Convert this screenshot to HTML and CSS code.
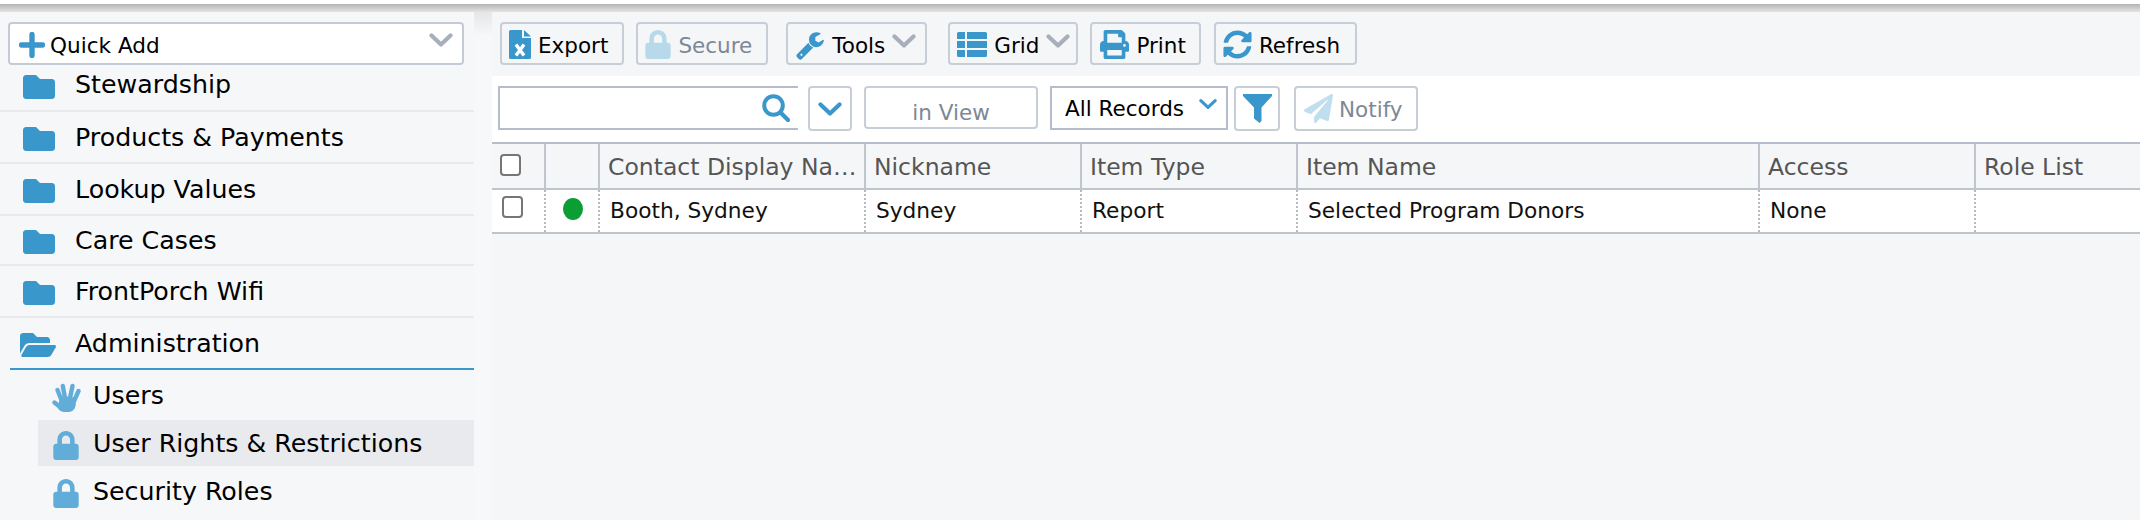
FILE: index.html
```html
<!DOCTYPE html>
<html lang="en">
<head>
<meta charset="utf-8">
<title>User Rights &amp; Restrictions</title>
<link rel="stylesheet" href="styles.css">
</head>
<body>
<svg class="sprites" width="0" height="0" aria-hidden="true">
  <symbol id="i-folder" viewBox="0 0 512 512"><path d="M464 128H272l-64-64H48C21.49 64 0 85.49 0 112v288c0 26.51 21.49 48 48 48h416c26.51 0 48-21.49 48-48V176c0-26.51-21.49-48-48-48z"/></symbol>
  <symbol id="i-folder-open" viewBox="0 0 576 512"><path d="M572.694 292.093L500.27 416.248A63.997 63.997 0 0 1 444.989 448H45.025c-18.523 0-30.064-20.093-20.731-36.093l72.424-124.155A64 64 0 0 1 152 256h399.964c18.523 0 30.064 20.093 20.73 36.093zM152 224h328v-48c0-26.51-21.49-48-48-48H272l-64-64H48C21.49 64 0 85.49 0 112v278.046l69.077-118.418C86.214 242.25 117.989 224 152 224z"/></symbol>
  <symbol id="i-lock" viewBox="0 0 448 512"><path d="M400 224h-24v-72C376 68.2 307.8 0 224 0S72 68.2 72 152v72H48c-26.5 0-48 21.5-48 48v192c0 26.5 21.5 48 48 48h352c26.5 0 48-21.5 48-48V272c0-26.5-21.5-48-48-48zm-104 0H152v-72c0-39.7 32.3-72 72-72s72 32.3 72 72v72z"/></symbol>
  <symbol id="i-chev" viewBox="0 0 24 14"><path d="M2.5 2.5L12 11.5L21.5 2.5" fill="none" stroke="currentColor" stroke-width="4.2" stroke-linecap="round" stroke-linejoin="round"/></symbol>
</svg>

<div class="top-shadow"></div>
<div class="app">
  <aside class="sidebar">
    <div class="quick-add">
      <svg class="qa-plus" viewBox="0 0 26 26"><path d="M13 2.5V23.5M2.5 13H23.5" fill="none" stroke="currentColor" stroke-width="5.4" stroke-linecap="round"/></svg>
      <span>Quick Add</span>
      <svg class="chev qa-chev"><use href="#i-chev"/></svg>
    </div>
    <nav class="menu">
      <div class="menu-row first"><svg class="folder"><use href="#i-folder"/></svg><span>Stewardship</span></div>
      <div class="menu-row"><svg class="folder"><use href="#i-folder"/></svg><span>Products &amp; Payments</span></div>
      <div class="menu-row"><svg class="folder"><use href="#i-folder"/></svg><span>Lookup Values</span></div>
      <div class="menu-row short"><svg class="folder"><use href="#i-folder"/></svg><span>Care Cases</span></div>
      <div class="menu-row"><svg class="folder"><use href="#i-folder"/></svg><span>FrontPorch Wifi</span></div>
      <div class="menu-row open"><svg class="folder-open"><use href="#i-folder-open"/></svg><span>Administration</span></div>
      <div class="submenu">
        <div class="sub-item">
          <svg class="sub-icon hand" viewBox="0 0 29 29"><path d="M5.500 7L9 16M10.800 3L13 15M20.500 3L18 15M26.500 8L22.500 17M2.500 19.500L8 24" fill="none" stroke="currentColor" stroke-width="4.400" stroke-linecap="round"/><path d="M7.500 15L16 13.500L24.500 15L23.500 23C22.500 27 20 29 16 29H12C9.500 29 7.500 27.500 6 25.500Z" fill="currentColor"/></svg>
          <span>Users</span>
        </div>
        <div class="sub-item selected"><svg class="sub-icon"><use href="#i-lock"/></svg><span>User Rights &amp; Restrictions</span></div>
        <div class="sub-item"><svg class="sub-icon"><use href="#i-lock"/></svg><span>Security Roles</span></div>
      </div>
    </nav>
  </aside>
  <div class="divider"></div>
  <main class="content">
    <div class="toolbar">
      <button class="btn export">
        <svg class="ic ic-doc" viewBox="0 0 22 29"><path d="M0 1.500A1.500 1.500 0 0 1 1.500 0H13V8H22V27.500A1.500 1.500 0 0 1 20.500 29H1.500A1.500 1.500 0 0 1 0 27.500Z" fill="currentColor"/><path d="M15 0L22 6.500H15Z" fill="currentColor"/><path d="M7 14.500L15 25.500M15 14.500L7 25.500" fill="none" stroke="#fff" stroke-width="3.400"/></svg>
        <span>Export</span>
      </button>
      <button class="btn secure disabled"><svg class="ic ic-lock"><use href="#i-lock"/></svg><span>Secure</span></button>
      <button class="btn tools group-start">
        <svg class="ic ic-wrench" viewBox="0 0 1792 1792"><path d="M448 1472q0-26-19-45t-45-19-45 19-19 45 19 45 45 19 45-19 19-45zm644-420l-682 682q-37 37-90 37-52 0-91-37l-106-108q-38-36-38-90 0-53 38-91l681-681q39 98 114.500 173.500t173.500 114.500zm634-435q0 39-23 106-47 134-164.500 217.500t-258.500 83.500q-185 0-316.500-131.500t-131.500-316.500 131.500-316.500 316.500-131.500q58 0 121.500 16.500t107.500 46.500q16 11 16 28t-16 28l-293 169v224l193 107q5-3 79-48.500t135.500-81 70.500-35.500q15 0 23.500 10t8.500 25z" fill="currentColor"/></svg>
        <span>Tools</span>
        <svg class="chev"><use href="#i-chev"/></svg>
      </button>
      <button class="btn grid group-next">
        <svg class="ic ic-grid" viewBox="0 0 30 25"><path d="M0 1.500A1.500 1.500 0 0 1 1.500 0H8V7H0ZM10 0H28.500A1.500 1.500 0 0 1 30 1.500V7H10ZM0 9H8V16H0ZM10 9H30V16H10ZM0 18H8V25H1.500A1.500 1.500 0 0 1 0 23.500ZM10 18H30V23.500A1.500 1.500 0 0 1 28.500 25H10Z" fill="currentColor"/></svg>
        <span>Grid</span>
        <svg class="chev"><use href="#i-chev"/></svg>
      </button>
      <button class="btn print">
        <svg class="ic ic-print" viewBox="0 0 512 512"><path d="M448 192V77.250c0-8.490-3.370-16.620-9.370-22.630L393.370 9.370c-6-6-14.140-9.370-22.630-9.370H96C78.330 0 64 14.330 64 32v160c-35.350 0-64 28.650-64 64v112c0 8.840 7.160 16 16 16h48v96c0 17.670 14.330 32 32 32h320c17.670 0 32-14.330 32-32v-96h48c8.840 0 16-7.160 16-16V256c0-35.350-28.650-64-64-64zm-64 256H128v-96h256v96zm0-224H128V64h192v48c0 8.840 7.160 16 16 16h48v96zm48 72c-13.250 0-24-10.750-24-24 0-13.260 10.750-24 24-24s24 10.740 24 24c0 13.250-10.750 24-24 24z" fill="currentColor"/></svg>
        <span>Print</span>
      </button>
      <button class="btn refresh">
        <svg class="ic ic-sync" viewBox="0 0 512 512"><path d="M370.720 133.280C339.458 104.008 298.888 87.962 255.848 88c-77.458.068-144.328 53.178-162.791 126.850-1.344 5.363-6.122 9.150-11.651 9.150H24.103c-7.498 0-13.194-6.807-11.807-14.176C33.933 94.924 134.813 8 256 8c66.448 0 126.791 26.136 171.315 68.685L463.030 40.970C478.149 25.851 504 36.559 504 57.941V192c0 13.255-10.745 24-24 24H345.941c-21.382 0-32.090-25.851-16.971-40.971l41.750-41.749zM32 296h134.059c21.382 0 32.090 25.851 16.971 40.971l-41.750 41.750c31.262 29.273 71.835 45.319 114.876 45.280 77.418-.070 144.315-53.144 162.787-126.849 1.344-5.363 6.122-9.150 11.651-9.150h57.304c7.498 0 13.194 6.807 11.807 14.176C478.067 417.076 377.187 504 256 504c-66.448 0-126.791-26.136-171.315-68.685L48.970 471.030C33.851 486.149 8 475.441 8 454.059V320c0-13.255 10.745-24 24-24z" fill="currentColor"/></svg>
        <span>Refresh</span>
      </button>
    </div>
    <div class="filterbar">
      <div class="search">
        <svg class="search-icon" viewBox="0 0 28 28"><circle cx="11.500" cy="11.500" r="9.300" fill="none" stroke="currentColor" stroke-width="4"/><path d="M18.500 18.500L26 26" fill="none" stroke="currentColor" stroke-width="4.200" stroke-linecap="round"/></svg>
      </div>
      <div class="square-btn drop"><svg class="chev blue"><use href="#i-chev"/></svg></div>
      <div class="in-view">in View</div>
      <div class="records"><span>All Records</span><svg class="chev-small"><use href="#i-chev"/></svg></div>
      <div class="square-btn filter">
        <svg class="filter-icon" viewBox="0 0 29 29"><path d="M0 0H29V2L18.500 13.500V27L16.500 29L11 24.500V13.500L0 2Z" fill="currentColor"/></svg>
      </div>
      <div class="notify">
        <svg class="plane" viewBox="0 0 512 512"><path d="M476 3.200L12.500 270.600c-18.100 10.400-15.800 35.600 2.200 43.200L121 358.400l287.300-253.200c5.500-4.900 13.300 2.600 8.600 8.300L176 407v80.500c0 23.600 28.500 32.900 42.500 15.800L282 426l124.600 52.200c14.200 6 30.400-2.900 33-18.200l72-432C515 7.800 493.300-6.800 476 3.200z" fill="currentColor"/></svg>
        <span>Notify</span>
      </div>
    </div>
    <div class="table">
      <div class="tr head">
        <div class="td"><span class="cb"></span></div>
        <div class="td"></div>
        <div class="td">Contact Display Name</div>
        <div class="td">Nickname</div>
        <div class="td">Item Type</div>
        <div class="td">Item Name</div>
        <div class="td">Access</div>
        <div class="td">Role List</div>
      </div>
      <div class="tr body">
        <div class="td"><span class="cb"></span></div>
        <div class="td"><span class="dot"></span></div>
        <div class="td">Booth, Sydney</div>
        <div class="td">Sydney</div>
        <div class="td">Report</div>
        <div class="td">Selected Program Donors</div>
        <div class="td">None</div>
        <div class="td"></div>
      </div>
    </div>
  </main>
</div>
</body>
</html>
```

FILE: styles.css
```css
* { box-sizing: border-box; }
html, body { margin: 0; height: 520px; overflow: hidden; }
body { background: #fff; font-family: "DejaVu Sans", Verdana, sans-serif; color: #000; }
.sprites { position: absolute; }
svg { display: block; flex: none; }

.top-shadow { height: 8px; margin-top: 4px; background: linear-gradient(#b4b4b4, #e4e4e6); }
.app { display: flex; height: 508px; }

/* sidebar */
.sidebar { width: 474px; background: #f6f7f9; flex: none; overflow: hidden; padding-top: 10px; }
.quick-add {
  display: flex; align-items: center; height: 43px; margin: 0 10px 0 8px; padding: 4px 9px 0 9px;
  background: #fff; border: 2px solid #c5cbd6; border-radius: 4px; font-size: 21.6px; gap: 5px;
}
.qa-plus { width: 26px; height: 26px; color: #3a97cb; margin-top: -2px; }
.qa-chev { margin-left: auto; margin-top: -12px; }
.chev { width: 24px; height: 14px; color: #a8afbb; }
.chev.blue { color: #3a97cb; }
.menu-row {
  display: flex; align-items: center; height: 52px; padding-left: 23px; gap: 20px;
  font-size: 25.3px; border-bottom: 2px solid #e8e9ec;
}
.menu-row.first { height: 47px; padding-bottom: 6px; }
.menu-row.short { height: 50px; }
.folder { width: 32px; height: 32px; fill: #3a97cb; margin-top: 4px; }
.folder-open { width: 36px; height: 32px; fill: #3a97cb; margin-top: 4px; }
.menu-row.open { margin-left: 10px; padding-left: 10px; gap: 19px; border-bottom-color: #3a97cb; }
.submenu { display: flex; flex-direction: column; gap: 2px; padding-top: 2px; margin-left: 38px; }
.sub-item { display: flex; align-items: center; height: 46px; padding-left: 15px; gap: 14px; font-size: 25.3px; }
.sub-item.selected { background: #e9eaed; }
.sub-icon { width: 26px; height: 29px; fill: #61acd8; color: #61acd8; margin-top: 4px; }
.sub-icon.hand { width: 29px; margin-left: -1px; margin-right: -2px; }

.divider { width: 18px; flex: none; background: linear-gradient(#e6e6e8, #f7f8fa 24px); }

/* main */
.content { flex: 1; min-width: 0; background: #f5f6f8; }
.toolbar { display: flex; align-items: flex-start; gap: 12px; height: 64px; padding: 10px 0 0 8px; }
.btn {
  display: flex; align-items: center; height: 43px; padding: 4px 14px 0 7px; gap: 7px;
  font: inherit; font-size: 21.5px; color: #000; background: #f5f6f8;
  border: 2px solid #c8ced8; border-radius: 4px;
}
.btn.group-start { margin-left: 6px; padding: 4px 9px 0 7px; }
.btn.group-next { margin-left: 9px; padding: 4px 6px 0 7px; }
.btn.disabled { color: #7d8896; padding-right: 14px; }
.btn .chev { margin-top: -10px; }
.ic { color: #3a97cb; margin-top: -2px; }
.ic-doc { width: 22px; height: 29px; }
.ic-lock { width: 26px; height: 29px; fill: #b8d9e9; }
.ic-wrench { width: 30px; height: 30px; }
.ic-grid { width: 30px; height: 25px; }
.ic-print { width: 29px; height: 29px; }
.ic-sync { width: 29px; height: 29px; }
.btn.print { padding-left: 8px; padding-right: 13px; }
.btn.refresh { margin-left: 1px; padding-left: 7px; padding-right: 15px; }

.filterbar { display: flex; align-items: flex-start; height: 66px; padding: 10px 0 0 6px; background: #fff; }
.search {
  display: flex; align-items: center; justify-content: flex-end; width: 300px; height: 44px; padding-right: 8px;
  border: 2px solid #b6bccb; border-right: 0;
}
.search-icon { width: 28px; height: 28px; color: #3a97cb; }
.square-btn {
  display: flex; align-items: center; justify-content: center; height: 45px; background: #fff;
  border: 2px solid #c8ced8; border-radius: 4px;
}
.drop { width: 44px; margin-left: 10px; }
.in-view {
  display: flex; align-items: center; justify-content: center; width: 174px; height: 43px; margin-left: 12px; padding-top: 9px;
  font-size: 21.5px; color: #7d8896; border: 2px solid #c8ced8; border-radius: 4px;
}
.records {
  display: flex; align-items: center; width: 178px; height: 44px; margin-left: 12px; padding: 0 9px 0 13px;
  font-size: 21.5px; border: 2px solid #b6bccb;
}
.chev-small { width: 18px; height: 12px; margin: -9px 0 0 auto; color: #3a97cb; }
.filter { width: 46px; margin-left: 6px; }
.filter-icon { width: 29px; height: 29px; color: #3a97cb; }
.notify {
  display: flex; align-items: center; gap: 6px; width: 124px; height: 45px; margin-left: 14px; padding-left: 8px;
  font-size: 21.5px; color: #7d8896; border: 2px solid #c8ced8; border-radius: 4px;
}
.notify span { padding-top: 2px; }
.plane { width: 29px; height: 29px; color: #c0dfee; }

/* table */
.table { border-top: 2px solid #b6bccb; }
.tr { display: grid; grid-template-columns: 54px 54px 266px 216px 216px 462px 216px 1fr; }
.td { display: flex; align-items: center; min-width: 0; overflow: hidden; white-space: nowrap; text-overflow: ellipsis; }
.head { height: 46px; background: #f5f6f8; border-bottom: 2px solid #c0c4cc; font-size: 23.5px; color: #555; }
.head .td { display: block; line-height: 47px; padding-left: 8px; border-right: 2px solid #c0c4cc; }
.head .td:last-child { border-right: 0; }
.body { height: 44px; background: #fff; border-bottom: 2px solid #c0c4cc; font-size: 21.7px; color: #111; }
.body .td { padding: 0 0 2px 10px; border-right: 2px dotted #bbb; }
.body .td:last-child { border-right: 0; }
.cb { display: block; width: 21px; height: 22px; background: #fff; border: 2px solid #767676; border-radius: 4px; }
.head .cb { margin-top: 10px; }
.body .cb { margin-top: -6px; }
.dot { display: block; width: 20px; height: 22px; margin: -2px 0 0 7px; border-radius: 50%; background: #0a9e35; }
```
